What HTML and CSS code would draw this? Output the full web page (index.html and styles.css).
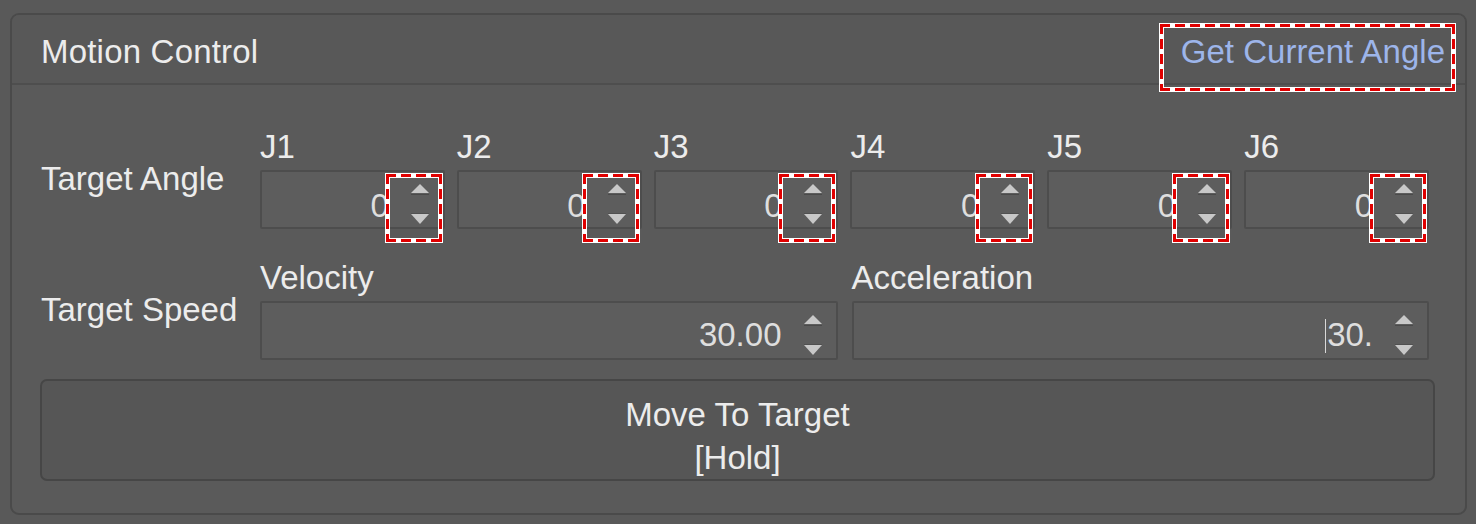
FILE: index.html
```html
<!DOCTYPE html>
<html lang="en">
<head>
  <meta charset="UTF-8">
  <title>Motion Control</title>
  <link rel="stylesheet" href="styles.css">
</head>
<body>

  <div class="panel">
    <div class="panel-head">
      <span class="title">Motion Control</span>
      <span class="link">Get Current Angle<span class="mark"></span></span>
    </div>

    <div class="panel-body">
      <div class="row">
        <div class="row-label">Target Angle</div>
        <div class="fields six">
          <div class="field">
            <div class="field-label">J1</div>
            <div class="spin">
              <span class="val">0</span>
              <svg class="arrows" width="18" height="42" viewBox="0 0 18 42"><polygon points="0,10 9,1 18,10" fill="#c8c8c8"/><rect x="0" y="11" width="18" height="1" fill="#4a4a4a"/><polygon points="0,31 18,31 9,41" fill="#c8c8c8"/><rect x="0" y="30" width="18" height="1" fill="#505050"/></svg>
              <span class="mark"></span>
            </div>
          </div>
          <div class="field">
            <div class="field-label">J2</div>
            <div class="spin">
              <span class="val">0</span>
              <svg class="arrows" width="18" height="42" viewBox="0 0 18 42"><polygon points="0,10 9,1 18,10" fill="#c8c8c8"/><rect x="0" y="11" width="18" height="1" fill="#4a4a4a"/><polygon points="0,31 18,31 9,41" fill="#c8c8c8"/><rect x="0" y="30" width="18" height="1" fill="#505050"/></svg>
              <span class="mark"></span>
            </div>
          </div>
          <div class="field">
            <div class="field-label">J3</div>
            <div class="spin">
              <span class="val">0</span>
              <svg class="arrows" width="18" height="42" viewBox="0 0 18 42"><polygon points="0,10 9,1 18,10" fill="#c8c8c8"/><rect x="0" y="11" width="18" height="1" fill="#4a4a4a"/><polygon points="0,31 18,31 9,41" fill="#c8c8c8"/><rect x="0" y="30" width="18" height="1" fill="#505050"/></svg>
              <span class="mark"></span>
            </div>
          </div>
          <div class="field">
            <div class="field-label">J4</div>
            <div class="spin">
              <span class="val">0</span>
              <svg class="arrows" width="18" height="42" viewBox="0 0 18 42"><polygon points="0,10 9,1 18,10" fill="#c8c8c8"/><rect x="0" y="11" width="18" height="1" fill="#4a4a4a"/><polygon points="0,31 18,31 9,41" fill="#c8c8c8"/><rect x="0" y="30" width="18" height="1" fill="#505050"/></svg>
              <span class="mark"></span>
            </div>
          </div>
          <div class="field">
            <div class="field-label">J5</div>
            <div class="spin">
              <span class="val">0</span>
              <svg class="arrows" width="18" height="42" viewBox="0 0 18 42"><polygon points="0,10 9,1 18,10" fill="#c8c8c8"/><rect x="0" y="11" width="18" height="1" fill="#4a4a4a"/><polygon points="0,31 18,31 9,41" fill="#c8c8c8"/><rect x="0" y="30" width="18" height="1" fill="#505050"/></svg>
              <span class="mark"></span>
            </div>
          </div>
          <div class="field">
            <div class="field-label">J6</div>
            <div class="spin">
              <span class="val">0</span>
              <svg class="arrows" width="18" height="42" viewBox="0 0 18 42"><polygon points="0,10 9,1 18,10" fill="#c8c8c8"/><rect x="0" y="11" width="18" height="1" fill="#4a4a4a"/><polygon points="0,31 18,31 9,41" fill="#c8c8c8"/><rect x="0" y="30" width="18" height="1" fill="#505050"/></svg>
              <span class="mark"></span>
            </div>
          </div>
        </div>
      </div>

      <div class="row">
        <div class="row-label">Target Speed</div>
        <div class="fields two">
          <div class="field">
            <div class="field-label">Velocity</div>
            <div class="spin wide">
              <span class="val">30.00</span>
              <svg class="arrows" width="18" height="42" viewBox="0 0 18 42"><polygon points="0,10 9,1 18,10" fill="#c8c8c8"/><rect x="0" y="11" width="18" height="1" fill="#4a4a4a"/><polygon points="0,31 18,31 9,41" fill="#c8c8c8"/><rect x="0" y="30" width="18" height="1" fill="#505050"/></svg>
            </div>
          </div>
          <div class="field">
            <div class="field-label">Acceleration</div>
            <div class="spin wide">
              <span class="val"><span class="caret"></span>30.</span>
              <svg class="arrows" width="18" height="42" viewBox="0 0 18 42"><polygon points="0,10 9,1 18,10" fill="#c8c8c8"/><rect x="0" y="11" width="18" height="1" fill="#4a4a4a"/><polygon points="0,31 18,31 9,41" fill="#c8c8c8"/><rect x="0" y="30" width="18" height="1" fill="#505050"/></svg>
            </div>
          </div>
        </div>
      </div>

      <button class="btn">Move To Target<br>[Hold]</button>
    </div>
  </div>

</body>
</html>
```

FILE: styles.css
```css
body {
  font-family: 'Liberation Sans', Arial, sans-serif;
  font-size: 33px;
  line-height: 38px;
  background: #595959;
  color: #ececec;
  margin: 0;
  padding: 13px 9px 0 10px;
}

.panel {
  border: 2px solid #4a4a4a;
  border-radius: 9px;
  background: #5a5a5a;
}

.panel-head {
  display: flex;
  justify-content: space-between;
  padding: 18px 20px 12px 29px;
  border-bottom: 2px solid #4e4e4e;
  background: #585858;
  border-radius: 7px 7px 0 0;
}

.title {
  letter-spacing: 0.2px;
}

.link {
  position: relative;
  color: #9db5ea;
}

/* red dashed highlight boxes: white frame, dashes drawn on top */
.mark {
  position: absolute;
  box-sizing: border-box;
  border: 5px solid #fff;
  pointer-events: none;
}

.mark::before {
  content: '';
  position: absolute;
  top: -4px;
  left: -4px;
  right: -4px;
  bottom: -4px;
  background:
    repeating-linear-gradient(90deg, #e00000 0 10px, transparent 10px 15px) 0 0 / 100% 3px no-repeat,
    repeating-linear-gradient(90deg, #e00000 0 10px, transparent 10px 15px) 0 100% / 100% 3px no-repeat,
    repeating-linear-gradient(180deg, #e00000 0 10px, transparent 10px 15px) 0 0 / 3px 100% no-repeat,
    repeating-linear-gradient(180deg, #e00000 0 10px, transparent 10px 15px) 100% 0 / 3px 100% no-repeat;
}

.link .mark {
  left: -22px;
  right: -11px;
  top: -10px;
  bottom: -21px;
}

.panel-body {
  padding: 43px 30px 32px 28px;
}

.row {
  display: grid;
  grid-template-columns: 220px 1fr;
  align-items: center;
  margin-right: 6px;
}

.row + .row {
  margin-top: 30px;
}

.row-label {
  padding-left: 1px;
}

.fields {
  display: grid;
  gap: 12px;
}

.fields.six {
  grid-template-columns: repeat(6, 1fr);
}

.fields.two {
  grid-template-columns: 1fr 1fr;
  gap: 14px;
}

.field-label {
  margin-bottom: 4px;
}

.spin {
  position: relative;
  box-sizing: border-box;
  height: 59px;
  display: flex;
  justify-content: flex-end;
  align-items: flex-start;
  padding-right: 14px;
  border: 2px solid #4d4d4d;
  border-radius: 2px;
  background: #5d5d5d;
}

.spin .val {
  margin-top: 15px;
  margin-right: 22px;
  color: #dedede;
}

.spin.wide .val {
  margin-top: 13px;
}

.spin .arrows {
  margin-top: 11px;
}

.spin .mark {
  right: 0;
  top: 1px;
  width: 58px;
  height: 70px;
}

.caret {
  display: inline-block;
  width: 1px;
  height: 34px;
  margin-right: 1px;
  vertical-align: -7px;
  background: #d8d8d8;
}

.btn {
  display: block;
  width: 100%;
  height: 102px;
  margin-top: 19px;
  padding: 12px 0 0;
  box-sizing: border-box;
  border: 2px solid #464646;
  border-radius: 7px;
  background: #565656;
  color: #ececec;
  font-family: inherit;
  font-size: 33px;
  line-height: 43px;
  text-align: center;
}
```
